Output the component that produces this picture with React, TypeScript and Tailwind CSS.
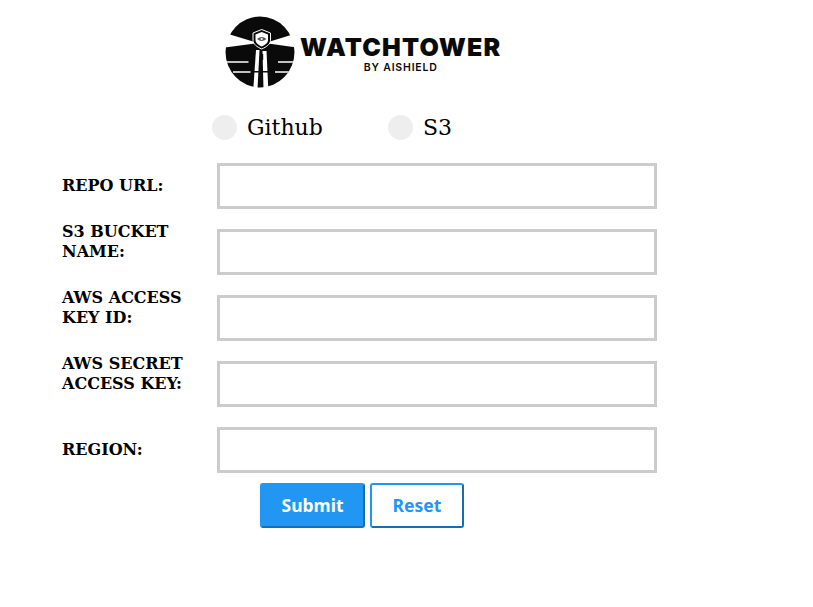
import React from 'react';

const fields = [
  { name: 'REPO URL:', wrapped: false },
  { name: 'S3 BUCKET NAME:', wrapped: true },
  { name: 'AWS ACCESS KEY ID:', wrapped: true },
  { name: 'AWS SECRET ACCESS KEY:', wrapped: true },
  { name: 'REGION:', wrapped: false },
];

const LogoMark = () => (
  <svg width="72" height="76" viewBox="0 0 72 76" className="shrink-0">
    <defs>
      <clipPath id="disc">
        <ellipse cx="35" cy="37" rx="34.5" ry="35.5" />
      </clipPath>
    </defs>
    <g clipPath="url(#disc)">
      {/* top cap */}
      <polygon points="0,0 72,0 72,18 45,26.5 28,26.5 0,18" fill="#0a0a0a" />
      {/* lower half */}
      <polygon points="0,32.5 30,28.5 43,28.5 72,32.5 72,76 0,76" fill="#0a0a0a" />
      {/* horizon stripes */}
      <path d="M0 47H23.5M8 57H25.5M53 47H72M50 57H68" stroke="#fff" strokeWidth="1.6" />
    </g>
    {/* tower */}
    <polygon points="31,35 34.5,35 32.5,74 28.3,74" fill="#fff" />
    <polygon points="37.5,36 41.5,36 43.3,74 38.5,74" fill="#fff" />
    <rect x="36" y="39" width="2.2" height="6" fill="#0a0a0a" />
    <rect x="27" y="56" width="16" height="1.5" fill="#0a0a0a" />
    {/* shield */}
    <path d="M36.7 14.5L45.5 18V25.5C45.5 29 41.5 32 36.7 34C32 32 28 29 28 25.5V18Z" fill="#0a0a0a" stroke="#fff" strokeWidth="1" />
    <path d="M36.7 17L43 19.5V25C43 28 40 30 36.7 31.5C33.5 30 30.5 28 30.5 25V19.5Z" fill="#fff" />
    <path d="M32 24Q36.7 20 41.5 24Q36.7 28 32 24Z" fill="#555555" />
    <circle cx="36.7" cy="24" r="1.1" fill="#fff" />
  </svg>
);

const Radio = ({ label, className }: { label: string; className: string }) => (
  <label className={`flex items-center ${className}`}>
    <span className="w-[25px] h-[25px] rounded-full bg-[#eeeeee]" />
    <span className="ml-[10px] pt-[1px] text-[22px] leading-[25px] text-black">{label}</span>
  </label>
);

export default function App() {
  return (
    <div className="w-[813px] h-[607px] bg-white overflow-hidden font-['DejaVu_Serif',serif]">
      {/* Logo */}
      <div className="flex items-center pl-[225px] pt-[15px] h-[91px]">
        <LogoMark />
        <div className="flex flex-col items-center ml-[3px] mt-[2px] font-['Inter',sans-serif] text-[#0a0a0a]">
          <span className="text-[25px] leading-[24px] font-black tracking-[1.15px]">WATCHTOWER</span>
          <span className="text-[10.5px] leading-[13px] font-semibold tracking-[0.8px] mt-[2px]">BY AISHIELD</span>
        </div>
      </div>

      {/* Source type */}
      <div className="flex pl-[212px] mt-[23px]">
        <Radio label="Github" className="w-[176px]" />
        <Radio label="S3" className="" />
      </div>

      {/* Fields */}
      <form className="flex flex-col gap-[20px] pl-[62px] mt-[23px]">
        {fields.map(({ name, wrapped }) => (
          <div key={name} className="flex items-center">
            <span className={`w-[155px] pr-[20px] text-[16px] leading-[20px] font-bold text-black ${wrapped ? 'self-start -mt-[7px]' : ''}`}>
              {name}
            </span>
            <input type="text" className="w-[440px] h-[46px] border-[3px] border-[#cccccc] bg-white" />
          </div>
        ))}
      </form>

      {/* Actions */}
      <div className="flex gap-[5px] pl-[260px] mt-[10px] font-['Noto_Sans',sans-serif] text-[17.5px] font-bold">
        <button type="button" className="w-[105px] h-[45px] rounded-[3px] bg-[#2196f3] text-white border-2 border-[#2196f3] border-b-[#1a6cb0] border-r-[#1a6cb0]">
          Submit
        </button>
        <button type="button" className="w-[94px] h-[45px] rounded-[3px] bg-white text-[#2196f3] border-2 border-[#2196f3] border-b-[#1a6cb0] border-r-[#1a6cb0]">
          Reset
        </button>
      </div>
    </div>
  );
}
